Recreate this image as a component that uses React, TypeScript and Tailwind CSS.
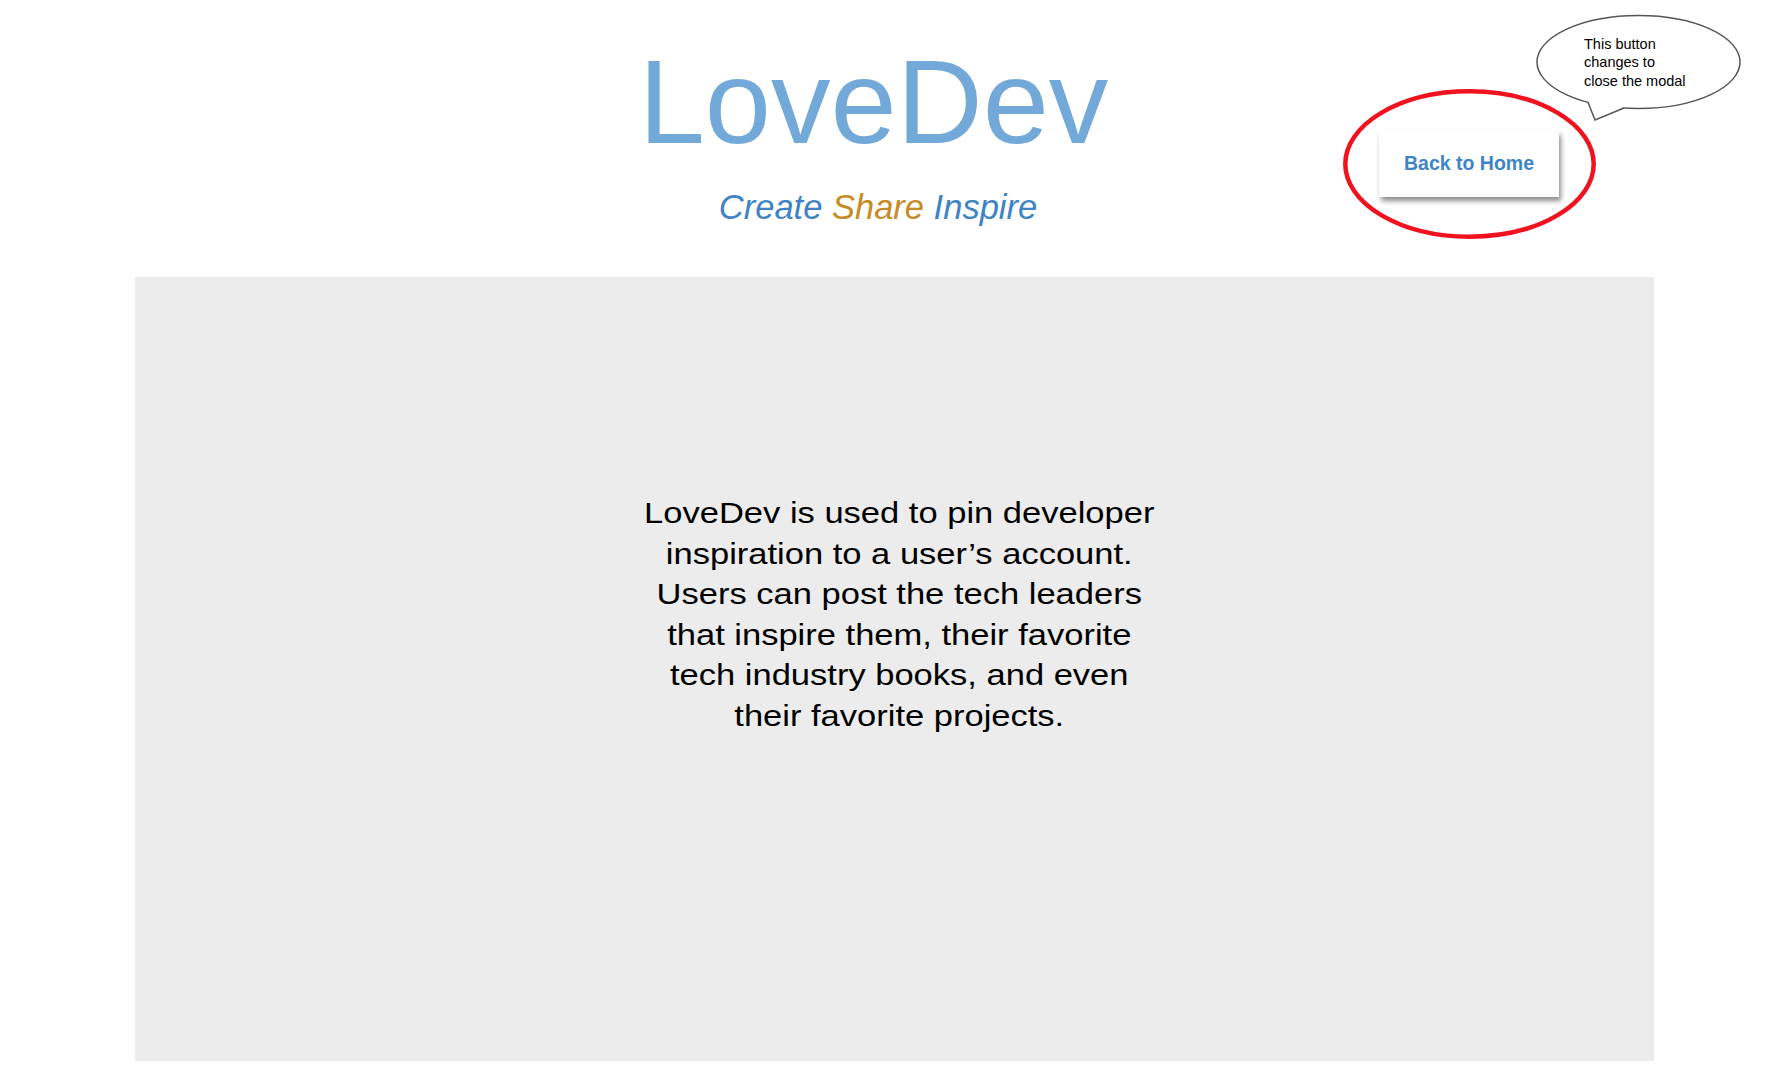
export default function App() {
  return (
    <div className="min-h-screen bg-white font-['Liberation_Sans',Arial,sans-serif]">
      <header className="relative flex flex-col items-center pr-[19px]">
        <h1 className="mt-[42px] text-[119px] leading-[119px] font-normal text-[#72a9d9]">LoveDev</h1>
        <p className="ml-[9px] mt-[26px] text-[34.5px] leading-[40px] italic text-[#3e83c6]">
          Create <span className="text-[#c68b24]">Share</span> Inspire
        </p>

        {/* back button with red highlight */}
        <button
          type="button"
          className="absolute left-[1379px] top-[131px] flex h-[66px] w-[180px] items-center justify-center bg-white text-[19.5px] font-bold text-[#3e84c6] shadow-[2px_4px_5px_rgba(0,0,0,0.45)]"
        >
          Back to Home
        </button>
        <svg className="pointer-events-none absolute left-[1343px] top-[89px]" width="253" height="150" viewBox="0 0 253 150">
          <ellipse cx="126.5" cy="75" rx="124.2" ry="72.7" fill="none" stroke="#f0131f" strokeWidth="4.5" />
        </svg>

        {/* speech bubble note */}
        <svg className="pointer-events-none absolute left-[1530px] top-[10px]" width="215" height="115" viewBox="0 0 215 115">
          <ellipse cx="108.5" cy="52" rx="101.5" ry="46.5" fill="white" stroke="#555" strokeWidth="1.5" />
          <polygon points="58,90 65,110 94,97 94,94 58,88" fill="white" />
          <polyline points="58,92.3 65,110 94,98" fill="none" stroke="#555" strokeWidth="1.5" strokeLinejoin="miter" />
        </svg>
        <div className="absolute left-[1584px] top-[35px] text-[14.5px] leading-[18.3px] text-black">
          This button
          <br />
          changes to
          <br />
          close the modal
        </div>
      </header>

      <main className="ml-[135px] mt-[50px] h-[784px] w-[1519px] bg-[#ececec] pt-[216px]">
        <p className="scale-x-[1.19] pl-2 text-center text-[29px] leading-[40.6px] text-black">
          LoveDev is used to pin developer
          <br />
          inspiration to a user’s account.
          <br />
          Users can post the tech leaders
          <br />
          that inspire them, their favorite
          <br />
          tech industry books, and even
          <br />
          their favorite projects.
        </p>
      </main>
    </div>
  )
}
